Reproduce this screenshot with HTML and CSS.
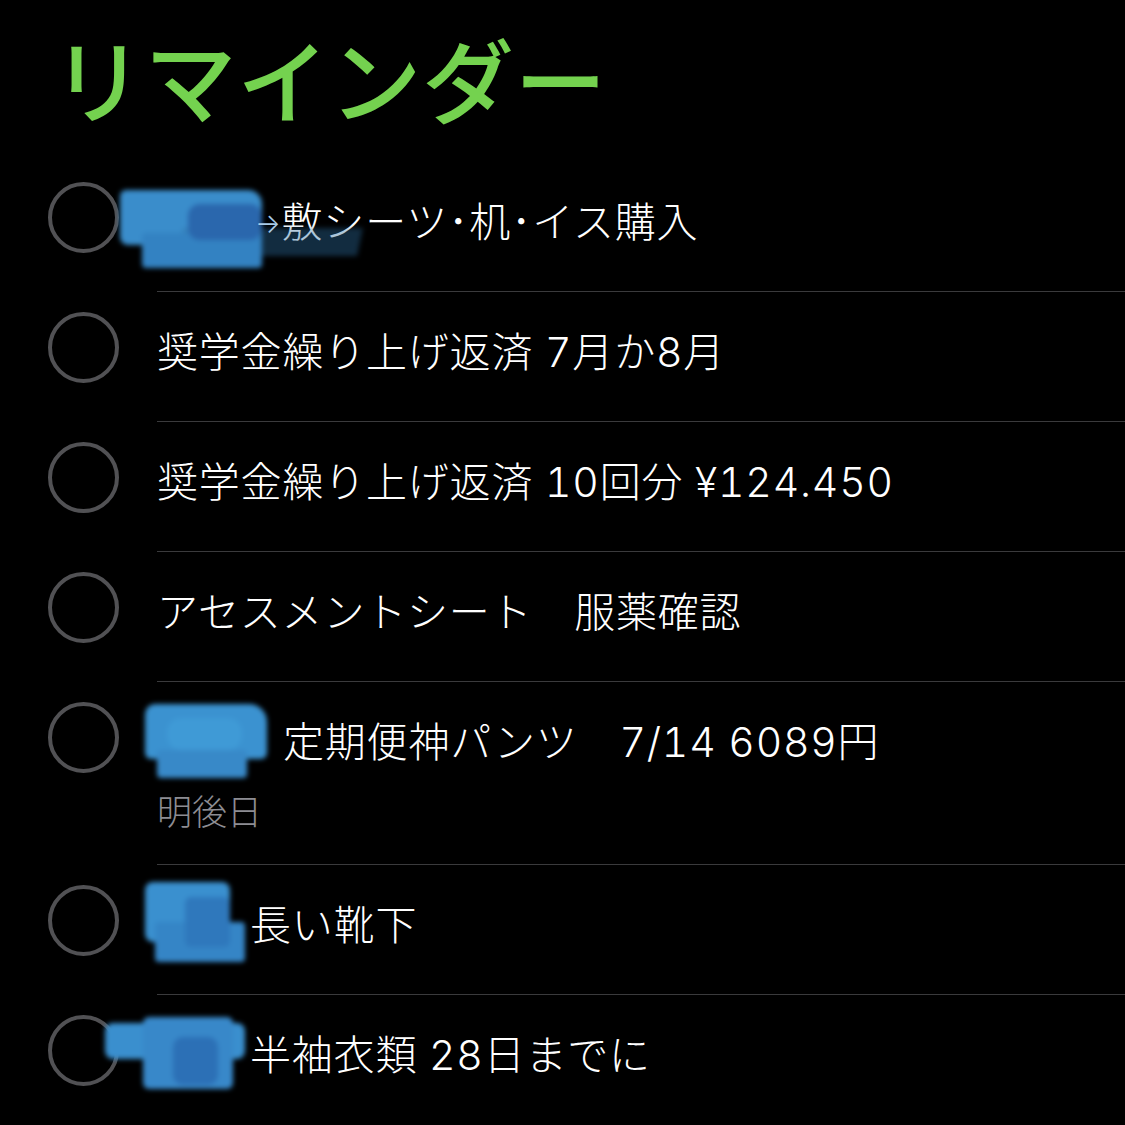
FILE: index.html
```html
<!DOCTYPE html>
<html lang="ja">
<head>
<meta charset="utf-8">
<title>リマインダー</title>
<link rel="stylesheet" href="styles.css">
</head>
<body>
<main class="screen">
  <header class="header">
    <h1 class="title">リマインダー</h1>
  </header>
  <ul class="list">
    <li class="row">
      <span class="check"></span>
      <div class="body">
        <div class="text"><span class="pad pad-1"></span><span class="arrow">→</span>敷シーツ･机･イス購入</div>
      </div>
      <div class="blob blob-1">
        <span class="b b1a"></span><span class="b b1b"></span><span class="b b1c"></span><span class="b b1d"></span>
      </div>
    </li>
    <li class="row">
      <span class="check"></span>
      <div class="body"><div class="text">奨学金繰り上げ返済 7月か8月</div></div>
    </li>
    <li class="row">
      <span class="check"></span>
      <div class="body"><div class="text">奨学金繰り上げ返済 10回分 ¥124.450</div></div>
    </li>
    <li class="row">
      <span class="check"></span>
      <div class="body"><div class="text">アセスメントシート　服薬確認</div></div>
    </li>
    <li class="row">
      <span class="check"></span>
      <div class="body body-sub">
        <div class="text"><span class="pad pad-5"></span>定期便神パンツ　7/14 6089円</div>
        <div class="sub">明後日</div>
      </div>
      <div class="blob blob-5">
        <span class="b b5a"></span><span class="b b5b"></span><span class="b b5c"></span>
      </div>
    </li>
    <li class="row">
      <span class="check"></span>
      <div class="body"><div class="text"><span class="pad pad-6"></span>長い靴下</div></div>
      <div class="blob blob-6">
        <span class="b b6a"></span><span class="b b6b"></span><span class="b b6c"></span>
      </div>
    </li>
    <li class="row row-last">
      <span class="check"></span>
      <div class="body"><div class="text"><span class="pad pad-7"></span>半袖衣類 28日までに</div></div>
      <div class="blob blob-7">
        <span class="b b7a"></span><span class="b b7b"></span><span class="b b7c"></span>
      </div>
    </li>
  </ul>
</main>
</body>
</html>
```

FILE: styles.css
```css
html, body {
  margin: 0;
  padding: 0;
  background: #000;
}

.screen {
  width: 1125px;
  height: 1125px;
  overflow: hidden;
  background: #000;
  font-family: Inter, "Noto Sans CJK JP", sans-serif;
  color: #fff;
}

.header {
  height: 162px;
  box-sizing: border-box;
  padding: 22px 0 0 52px;
}

.title {
  margin: 0;
  font-family: "Noto Sans CJK JP", sans-serif;
  font-size: 92px;
  line-height: 110px;
  font-weight: 500;
  color: #74d24f;
  letter-spacing: 0.5px;
}

.list {
  list-style: none;
  margin: 0;
  padding: 0;
}

.row {
  position: relative;
  display: flex;
  align-items: flex-start;
  padding-left: 48px;
}

.check {
  flex: none;
  width: 71px;
  height: 71px;
  box-sizing: border-box;
  margin-top: 20px;
  border: 4px solid #515154;
  border-radius: 50%;
}

.body {
  flex: 1;
  margin-left: 38px;
  padding: 35px 0 44px;
  border-bottom: 1px solid #3a3a3c;
}

.body-sub {
  padding-bottom: 34px;
}

.row-last .body {
  border-bottom: none;
}

.text {
  font-size: 41px;
  line-height: 50px;
  font-weight: 300;
  letter-spacing: 0.8px;
  font-variant-numeric: tabular-nums;
  white-space: nowrap;
}

.arrow {
  position: relative;
  z-index: 2;
  font-size: 27px;
  line-height: 0;
  vertical-align: 4px;
  color: #a8cbe8;
}

.pad {
  display: inline-block;
  height: 1px;
}

.pad-1 { width: 98px; }
.pad-5 { width: 126px; }
.pad-6 { width: 93px; }
.pad-7 { width: 93px; }

.sub {
  margin-top: 23px;
  font-family: "Noto Sans CJK JP", sans-serif;
  font-size: 35px;
  line-height: 40px;
  font-weight: 300;
  color: #8d8d93;
}

/* redaction scribbles lying over the text */
.blob {
  position: absolute;
  filter: blur(2.5px);
}

.b {
  position: absolute;
  display: block;
}

.blob-1 { left: 120px; top: 26px; width: 245px; height: 84px; }
.b1a { left: 0; top: 2px; width: 142px; height: 55px; background: #3a8dcb; border-radius: 6px 14px 4px 8px; }
.b1b { left: 60px; top: 40px; width: 180px; height: 28px; background: rgba(44, 110, 160, 0.4); transform: skewX(-12deg); }
.b1c { left: 22px; top: 45px; width: 120px; height: 35px; background: #3382c2; border-radius: 4px; }
.b1d { left: 68px; top: 16px; width: 74px; height: 36px; background: #2a67ad; border-radius: 12px; }

.blob-5 { left: 145px; top: 18px; width: 125px; height: 80px; }
.b5a { left: 0; top: 4px; width: 122px; height: 55px; background: #3b92d0; border-radius: 10px 18px 6px 6px; }
.b5b { left: 12px; top: 50px; width: 90px; height: 28px; background: #3889c8; border-radius: 4px; }
.b5c { left: 22px; top: 18px; width: 75px; height: 32px; background: #3f9ad6; border-radius: 14px; }

.blob-6 { left: 145px; top: 17px; width: 102px; height: 82px; }
.b6a { left: 0; top: 0; width: 85px; height: 60px; background: #3a90cf; border-radius: 8px; }
.b6b { left: 10px; top: 40px; width: 90px; height: 40px; background: #3585c6; border-radius: 4px; }
.b6c { left: 40px; top: 15px; width: 45px; height: 50px; background: #2f78bc; border-radius: 6px; }

.blob-7 { left: 105px; top: 22px; width: 142px; height: 74px; }
.b7a { left: 0; top: 6px; width: 140px; height: 36px; background: #3a8fce; border-radius: 8px; }
.b7b { left: 38px; top: 0; width: 90px; height: 72px; background: #3888c9; border-radius: 6px; }
.b7c { left: 68px; top: 20px; width: 45px; height: 48px; background: #2c70b6; border-radius: 10px; }
```
